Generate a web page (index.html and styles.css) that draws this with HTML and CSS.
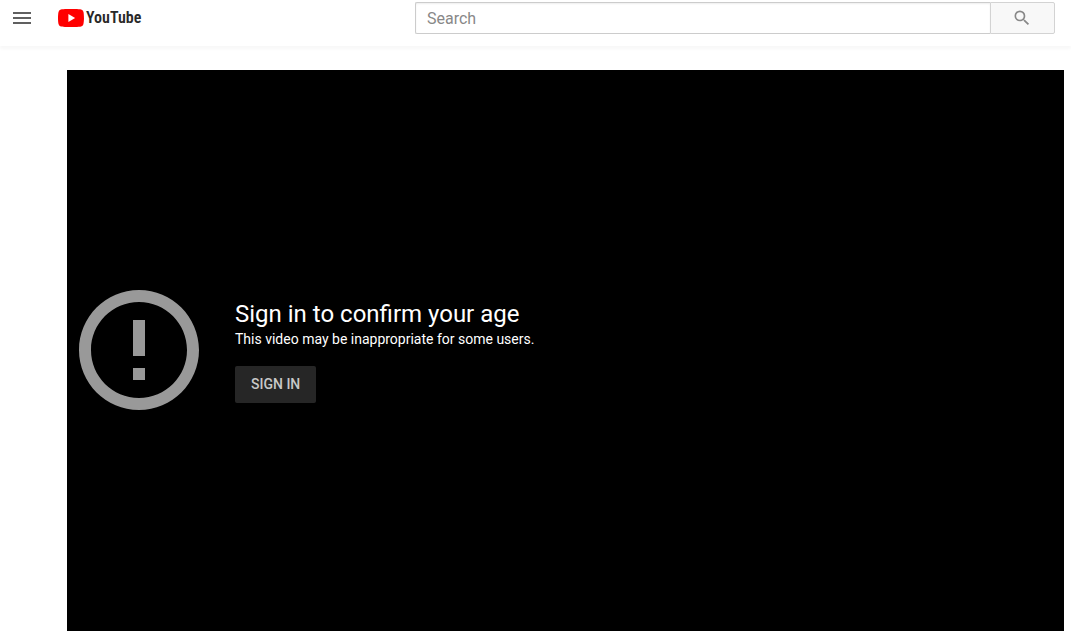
FILE: index.html
```
<!DOCTYPE html>
<html lang="en">
<head>
<meta charset="utf-8">
<title>YouTube</title>
<link rel="stylesheet" href="styles.css">
</head>
<body>
<header class="masthead">
  <div class="start">
    <button class="menu-button" type="button" aria-label="Guide">
      <svg class="icon" viewBox="0 0 24 24" aria-hidden="true"><path d="M3 18h18v-2H3v2zm0-5h18v-2H3v2zm0-7v2h18V6H3z"/></svg>
    </button>
    <a class="logo" href="#" aria-label="YouTube Home">
      <svg class="logo-mark" viewBox="0 0 26 18" aria-hidden="true">
        <path fill="#f00" d="M25.4 2.8A3.3 3.3 0 0 0 23.1.5C21 0 13 0 13 0S5 0 2.900.5A3.300 3.300 0 0 0 .6 2.800C0 4.900 0 9 0 9s0 4.100.6 6.200a3.300 3.300 0 0 0 2.300 2.300C5 18 13 18 13 18s8 0 10.100-.5a3.300 3.300 0 0 0 2.300-2.300C26 13.100 26 9 26 9s0-4.100-.6-6.200z"/>
        <path fill="#fff" d="M10.400 12.900 17.100 9l-6.700-3.900z"/>
      </svg>
      <span class="logo-text">YouTube</span>
    </a>
  </div>
  <form class="search" role="search">
    <input class="search-input" type="text" placeholder="Search" aria-label="Search">
    <button class="search-button" type="submit" aria-label="Submit search">
      <svg class="search-icon" viewBox="0 0 24 24" aria-hidden="true"><path d="M15.500 14h-.79l-.28-.27A6.471 6.471 0 0 0 16 9.500 6.500 6.500 0 1 0 9.500 16c1.610 0 3.090-.59 4.230-1.570l.27.28v.79l5 4.990L20.490 19l-4.990-5zm-6 0C7.010 14 5 11.990 5 9.500S7.010 5 9.500 5 14 7.010 14 9.500 11.990 14 9.500 14z"/></svg>
    </button>
  </form>
</header>
<main class="page">
  <section class="player">
    <svg class="alert-icon" viewBox="0 0 24 24" aria-hidden="true"><path d="M11 15h2v2h-2zm0-8h2v6h-2zm1-5C6.480 2 2 6.480 2 12s4.480 10 10 10 10-4.480 10-10S17.520 2 12 2zm0 18c-4.420 0-8-3.580-8-8s3.580-8 8-8 8 3.580 8 8-3.580 8-8 8z"/></svg>
    <div class="message">
      <h1 class="title">Sign in to confirm your age</h1>
      <p class="reason">This video may be inappropriate for some users.</p>
      <button class="sign-in" type="button">SIGN IN</button>
    </div>
  </section>
</main>
</body>
</html>
```
FILE: styles.css
```
* {
  box-sizing: border-box;
}

body {
  margin: 0;
  background: #fff;
  font-family: Roboto, sans-serif;
}

button {
  margin: 0;
  border: 0;
  padding: 0;
  font-family: inherit;
  cursor: pointer;
}

.masthead {
  display: flex;
  align-items: flex-start;
  justify-content: space-between;
  gap: 24px;
  height: 46px;
  padding: 2px 16px 0 10px;
  box-shadow: 0 3px 3px rgba(0, 0, 0, 0.03);
}

.start {
  display: flex;
  align-items: center;
  gap: 24px;
  height: 32px;
}

.menu-button {
  display: flex;
  background: none;
}

.icon {
  width: 24px;
  height: 24px;
  fill: #606060;
}

.logo {
  display: flex;
  align-items: center;
  gap: 2px;
  color: #282828;
  text-decoration: none;
}

.logo-mark {
  width: 26px;
  height: 18px;
}

.logo-text {
  font-family: "Roboto Condensed", "Liberation Sans Narrow", Roboto, sans-serif;
  font-size: 16px;
  font-weight: 600;
  line-height: 20px;
}

.search {
  display: flex;
  flex: 0 1 640px;
  height: 32px;
}

.search-input {
  flex: 1;
  min-width: 0;
  border: 1px solid #ccc;
  border-right: 0;
  border-radius: 2px 0 0 2px;
  padding: 1px 11px;
  background: #fff;
  box-shadow: inset 0 1px 2px #eee;
  color: #111;
  font-family: inherit;
  font-size: 16px;
}

.search-input::placeholder {
  color: #888;
}

.search-button {
  display: flex;
  align-items: center;
  justify-content: center;
  width: 65px;
  border: 1px solid #d3d3d3;
  border-radius: 0 2px 2px 0;
  padding-right: 2px;
  background: #f8f8f8;
}

.search-icon {
  width: 20px;
  height: 20px;
  fill: #888;
}

.page {
  padding: 24px 7px 10px 67px;
}

.player {
  display: flex;
  align-items: center;
  gap: 24px;
  aspect-ratio: 16 / 9;
  background: #000;
}

.alert-icon {
  flex: none;
  width: 144px;
  height: 144px;
  fill: #999;
}

.title {
  margin: 0;
  color: #fff;
  font-size: 24px;
  font-weight: 400;
  line-height: 32px;
}

.reason {
  margin: 0 0 18px;
  color: #fff;
  font-size: 14px;
  line-height: 18px;
}

.sign-in {
  display: block;
  border-radius: 2px;
  padding: 10px 16px;
  background: #262626;
  color: #c8c8c8;
  font-size: 14px;
  font-weight: 500;
  line-height: 17px;
}
```
